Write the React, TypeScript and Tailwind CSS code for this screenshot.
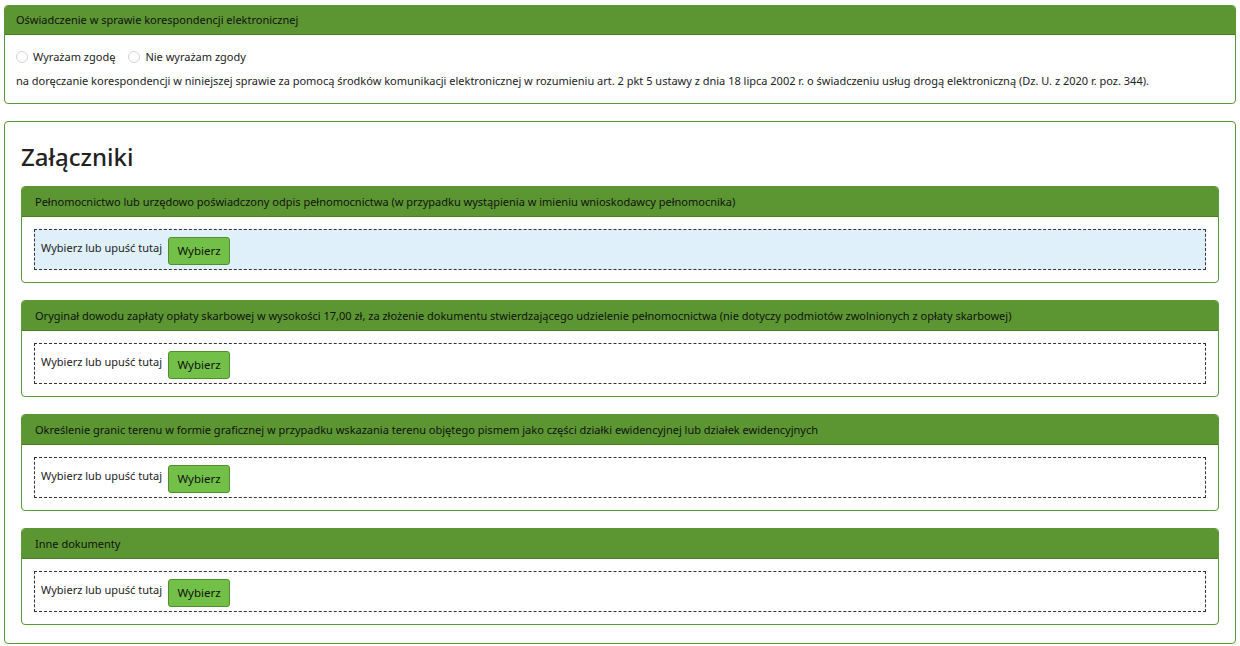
import React from "react"

const attachments = [
  { title: "Pełnomocnictwo lub urzędowo poświadczony odpis pełnomocnictwa (w przypadku wystąpienia w imieniu wnioskodawcy pełnomocnika)", active: true },
  { title: "Oryginał dowodu zapłaty opłaty skarbowej w wysokości 17,00 zł, za złożenie dokumentu stwierdzającego udzielenie pełnomocnictwa (nie dotyczy podmiotów zwolnionych z opłaty skarbowej)" },
  { title: "Określenie granic terenu w formie graficznej w przypadku wskazania terenu objętego pismem jako części działki ewidencyjnej lub działek ewidencyjnych" },
  { title: "Inne dokumenty" },
]

const Radio = ({ label }: { label: string }) => (
  <label className="flex items-center gap-[5px]">
    <span className="w-[12px] h-[12px] rounded-full border border-[#d4d4d4] bg-white" />
    <span>{label}</span>
  </label>
)

const DropZone = ({ active }: { active?: boolean }) => (
  <div
    className={
      "flex items-center gap-[6px] border border-dashed border-[#333] pl-[6px] h-[41px] " +
      (active ? "bg-[#dff0fa]" : "bg-white")
    }
  >
    <span className="-mt-[3px] text-[#222]">Wybierz lub upuść tutaj</span>
    <button className="mt-[2px] h-[28px] w-[62px] rounded-[3px] bg-[#72c048] border border-[#4f8f2e] text-[11.5px] text-[#111]">
      Wybierz
    </button>
  </div>
)

const AttachmentCard = ({ title, active }: { title: string; active?: boolean }) => (
  <div className="border border-[#5c9632] rounded-[4px] overflow-hidden">
    <div className="bg-[#5c9632] h-[30px] flex items-center px-[13px] border-b border-[#4a7d27] text-[#111]">
      {title}
    </div>
    <div className="p-[12px]">
      <DropZone active={active} />
    </div>
  </div>
)

export default function App() {
  return (
    <div
      className="bg-white min-h-screen px-[4px] pt-[5px] text-[11px] leading-[18px] text-[#222]"
      style={{ fontFamily: '"Noto Sans", "Open Sans", sans-serif' }}
    >
      <div className="border border-[#5c9632] rounded-[4px] overflow-hidden">
        <div className="bg-[#5c9632] h-[29px] flex items-center px-[11px] border-b border-[#4a7d27] text-[#111]">
          Oświadczenie w sprawie korespondencji elektronicznej
        </div>
        <div className="px-[11px] pt-[13px] pb-[13px]">
          <div className="flex items-center gap-[13px] h-[18px]">
            <Radio label="Wyrażam zgodę" />
            <Radio label="Nie wyrażam zgody" />
          </div>
          <p className="mt-[6px]">
            na doręczanie korespondencji w niniejszej sprawie za pomocą środków komunikacji elektronicznej w rozumieniu art. 2 pkt 5 ustawy z dnia 18 lipca 2002 r. o świadczeniu usług drogą elektroniczną (Dz. U. z 2020 r. poz. 344).
          </p>
        </div>
      </div>

      <div className="mt-[17px] border border-[#5c9632] rounded-[4px] px-[16px] pt-[17px] pb-[18px]">
        <h2 className="text-[24px] leading-[36px] font-medium text-[#222] mb-[11px]">Załączniki</h2>
        <div className="flex flex-col gap-[17px]">
          {attachments.map((a) => (
            <AttachmentCard key={a.title} title={a.title} active={a.active} />
          ))}
        </div>
      </div>
    </div>
  )
}
